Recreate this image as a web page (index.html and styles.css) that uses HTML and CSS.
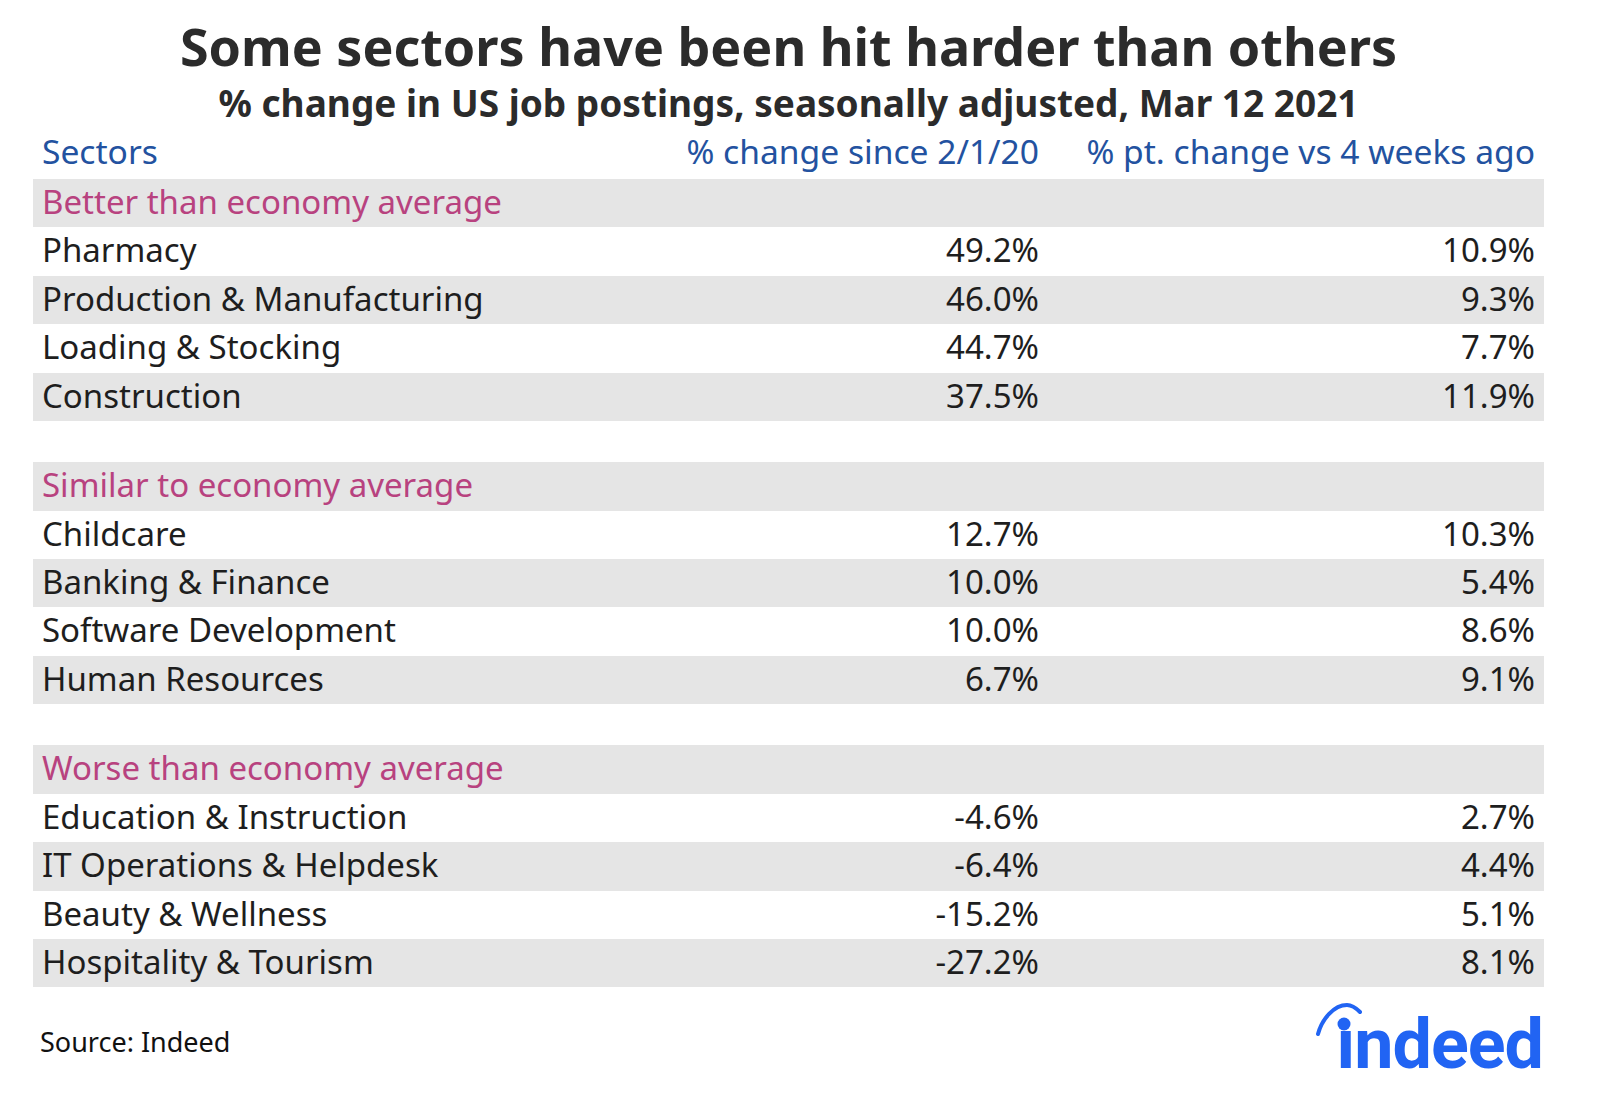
FILE: index.html
```html
<!DOCTYPE html>
<html lang="en">
<head>
<meta charset="utf-8">
<title>Some sectors have been hit harder than others</title>
<link rel="stylesheet" href="styles.css">
</head>
<body>
<div class="chart">
  <h1 class="title">Some sectors have been hit harder than others</h1>
  <h2 class="subtitle">% change in US job postings, seasonally adjusted, Mar 12 2021</h2>
  <div class="table">
    <div class="row head"><span>Sectors</span><span class="num">% change since 2/1/20</span><span class="num">% pt. change vs 4 weeks ago</span></div>

    <div class="row group shade"><span>Better than economy average</span></div>
    <div class="row"><span>Pharmacy</span><span class="num">49.2%</span><span class="num">10.9%</span></div>
    <div class="row shade"><span>Production &amp; Manufacturing</span><span class="num">46.0%</span><span class="num">9.3%</span></div>
    <div class="row"><span>Loading &amp; Stocking</span><span class="num">44.7%</span><span class="num">7.7%</span></div>
    <div class="row shade"><span>Construction</span><span class="num">37.5%</span><span class="num">11.9%</span></div>
    <div class="spacer"></div>

    <div class="row group shade"><span>Similar to economy average</span></div>
    <div class="row"><span>Childcare</span><span class="num">12.7%</span><span class="num">10.3%</span></div>
    <div class="row shade"><span>Banking &amp; Finance</span><span class="num">10.0%</span><span class="num">5.4%</span></div>
    <div class="row"><span>Software Development</span><span class="num">10.0%</span><span class="num">8.6%</span></div>
    <div class="row shade"><span>Human Resources</span><span class="num">6.7%</span><span class="num">9.1%</span></div>
    <div class="spacer"></div>

    <div class="row group shade"><span>Worse than economy average</span></div>
    <div class="row"><span>Education &amp; Instruction</span><span class="num">-4.6%</span><span class="num">2.7%</span></div>
    <div class="row shade"><span>IT Operations &amp; Helpdesk</span><span class="num">-6.4%</span><span class="num">4.4%</span></div>
    <div class="row"><span>Beauty &amp; Wellness</span><span class="num">-15.2%</span><span class="num">5.1%</span></div>
    <div class="row shade"><span>Hospitality &amp; Tourism</span><span class="num">-27.2%</span><span class="num">8.1%</span></div>
  </div>
  <div class="footer">
    <div class="source">Source: Indeed</div>
    <div class="logo">
      <span class="logo-text">&#305;ndeed</span>
      <svg class="logo-mark" width="80" height="50" viewBox="0 0 80 50" aria-hidden="true">
        <path d="M4 35 C8 20 20 6 33 6 C38 6 42 9 46 13" fill="none" stroke="#2164f3" stroke-width="4" stroke-linecap="round"/>
        <circle cx="30" cy="25" r="6.5" fill="#2164f3"/>
      </svg>
    </div>
  </div>
</div>
</body>
</html>
```

FILE: styles.css
```css
html, body {
  margin: 0;
  padding: 0;
  background: #ffffff;
}

body {
  font-family: "Noto Sans", "Open Sans", "Liberation Sans", sans-serif;
  color: #1e1e1e;
}

.chart {
  width: 1511px;
  margin-left: 33px;
  padding-top: 20px;
}

.title {
  margin: 0;
  font-size: 52px;
  line-height: 52px;
  font-weight: 700;
  color: #2b2b2b;
  text-align: center;
}

.subtitle {
  margin: 12.4px 0 0;
  font-size: 37px;
  line-height: 37px;
  font-weight: 700;
  color: #2b2b2b;
  text-align: center;
}

.table {
  margin-top: 9.2px;
}

.row {
  display: grid;
  grid-template-columns: 597px 400px 496px;
  box-sizing: border-box;
  height: 48.4px;
  padding: 0 9px 2.4px;
  font-size: 33px;
  line-height: 46px;
  white-space: nowrap;
}

.row.head {
  font-size: 33.6px;
  line-height: 40.4px;
  padding-bottom: 8px;
  color: #2352a0;
}

.row.shade {
  background: #e5e5e5;
}

.row.group {
  color: #b8427f;
}

.num {
  text-align: right;
}

.spacer {
  height: 41.3px;
}

.footer {
  display: flex;
  justify-content: space-between;
  align-items: flex-start;
  margin-top: 21.5px;
}

.source {
  margin-top: 18.7px;
  margin-left: 7px;
  font-size: 27px;
  line-height: 27px;
  color: #111111;
}

.logo {
  position: relative;
  margin-right: 1px;
  font-family: Roboto, "Liberation Sans", sans-serif;
  font-weight: 700;
  font-size: 70px;
  line-height: 70px;
  color: #2164f3;
  letter-spacing: -1px;
}

.logo-mark {
  position: absolute;
  left: -22px;
  top: -10px;
}
```
